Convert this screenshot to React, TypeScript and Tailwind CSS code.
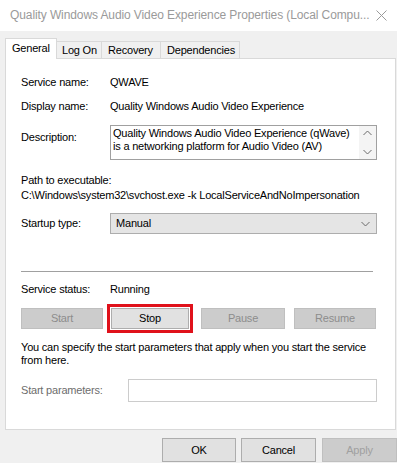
import React from "react";

const Btn = ({
  label,
  w,
  disabled,
  h = "h-[21px]",
}: {
  label: string;
  w: string;
  disabled?: boolean;
  h?: string;
}) => (
  <div
    className={`${w} ${h} flex items-center justify-center border ${
      disabled
        ? "bg-[#cccccc] border-[#bfbfbf] text-[#8c8c8c]"
        : "bg-[#e1e1e1] border-[#adadad] text-black"
    }`}
  >
    {label}
  </div>
);

const Chevron = ({ up }: { up?: boolean }) => (
  <svg width="9" height="6" viewBox="0 0 9 6" className="block">
    <path
      d={up ? "M0.5 5 L4.5 1 L8.5 5" : "M0.5 1 L4.5 5 L8.5 1"}
      fill="none"
      stroke="#6b6b6b"
      strokeWidth="1"
    />
  </svg>
);

export default function App() {
  return (
    <div className="w-[397px] h-[463px] bg-[#f0f0f0] overflow-hidden font-['Liberation_Sans',Arial,sans-serif] text-[11px] leading-[15px] tracking-[-0.2px] text-black">
      {/* title bar */}
      <div className="h-[31px] bg-white flex items-center pl-[10px] pr-[5px]">
        <span className="text-[12px] tracking-[-0.1px] text-[#9a9a9a] whitespace-nowrap flex-1">
          Quality Windows Audio Video Experience Properties (Local Compu...
        </span>
        <svg width="11" height="11" viewBox="0 0 11 11" className="mr-[5px]">
          <path d="M0.5 0.5 L10.5 10.5 M10.5 0.5 L0.5 10.5" stroke="#9a9a9a" strokeWidth="1" />
        </svg>
      </div>

      {/* tabs */}
      <div className="pt-[7px] ml-[5px] flex items-end h-[27px]">
        <div className="relative z-10 w-[52px] h-[21px] -mb-px bg-white border border-b-0 border-[#d9d9d9] pl-[6px] pt-[2px]">
          General
        </div>
        <div className="w-[45px] h-[17px] border-t border-r border-[#d9d9d9] bg-[#f0f0f0] pl-[5px] pt-[1px]">
          Log On
        </div>
        <div className="w-[59px] h-[17px] border-t border-r border-[#d9d9d9] bg-[#f0f0f0] pl-[6px] pt-[1px]">
          Recovery
        </div>
        <div className="w-[79px] h-[17px] border-t border-r border-[#d9d9d9] bg-[#f0f0f0] pl-[6px] pt-[1px]">
          Dependencies
        </div>
      </div>

      {/* panel */}
      <div className="ml-[5px] w-[391px] h-[372px] bg-white border border-[#d9d9d9] pl-[15px] pt-[16px]">
        <div className="flex h-[15px]">
          <div className="w-[89px]">Service name:</div>
          <div>QWAVE</div>
        </div>
        <div className="flex h-[15px] mt-[9px]">
          <div className="w-[89px]">Display name:</div>
          <div>Quality Windows Audio Video Experience</div>
        </div>
        <div className="flex mt-[11px]">
          <div className="w-[89px] pt-[5px]">Description:</div>
          <div className="w-[267px] h-[35px] border border-[#a0a0a0] flex">
            <div className="flex-1 pl-[2px] pt-[1px] leading-[13px]">
              Quality Windows Audio Video Experience (qWave)
              <br />
              is a networking platform for Audio Video (AV)
            </div>
            <div className="w-[17px] bg-[#f4f4f4] flex flex-col items-center justify-between pt-[4px] pb-[4px]">
              <Chevron up />
              <Chevron />
            </div>
          </div>
        </div>

        <div className="mt-[13px]">Path to executable:</div>
        <div className="whitespace-nowrap">
          C:\Windows\system32\svchost.exe -k LocalServiceAndNoImpersonation
        </div>

        <div className="flex items-center mt-[10px]">
          <div className="w-[89px]">Startup type:</div>
          <div className="w-[267px] h-[21px] bg-[#e5e5e5] border border-[#adadad] flex items-center pl-[5px] pr-[6px]">
            <span className="flex-1">Manual</span>
            <Chevron />
          </div>
        </div>

        <div className="mt-[37px] w-[352px] h-px bg-[#a0a0a0]" />

        <div className="flex h-[15px] mt-[10px]">
          <div className="w-[89px]">Service status:</div>
          <div>Running</div>
        </div>

        <div className="flex items-center h-[21px] mt-[11px]">
          <Btn label="Start" w="w-[82px]" disabled />
          <div className="ml-[4px] w-[86px] h-[29px] border-[3px] border-[#e0111b] flex items-center justify-center">
            <Btn label="Stop" w="w-[78px]" />
          </div>
          <div className="ml-[8px]">
            <Btn label="Pause" w="w-[84px]" disabled />
          </div>
          <div className="ml-[9px]">
            <Btn label="Resume" w="w-[82px]" disabled />
          </div>
        </div>

        <div className="mt-[12px] leading-[13px] whitespace-nowrap">
          You can specify the start parameters that apply when you start the service
          <br />
          from here.
        </div>

        <div className="flex items-center mt-[12px]">
          <div className="w-[107px] text-[#6d6d6d]">Start parameters:</div>
          <div className="w-[249px] h-[23px] bg-white border border-[#cccccc]" />
        </div>
      </div>

      {/* footer buttons */}
      <div className="flex mt-[8px] ml-[162px]">
        <Btn label="OK" w="w-[75px]" h="h-[24px]" />
        <div className="ml-[5px]">
          <Btn label="Cancel" w="w-[75px]" h="h-[24px]" />
        </div>
        <div className="ml-[6px]">
          <div className="w-[75px] h-[24px] flex items-center justify-center border bg-[#cccccc] border-[#bfbfbf] text-[#a0a0a0]">
            Apply
          </div>
        </div>
      </div>
    </div>
  );
}
